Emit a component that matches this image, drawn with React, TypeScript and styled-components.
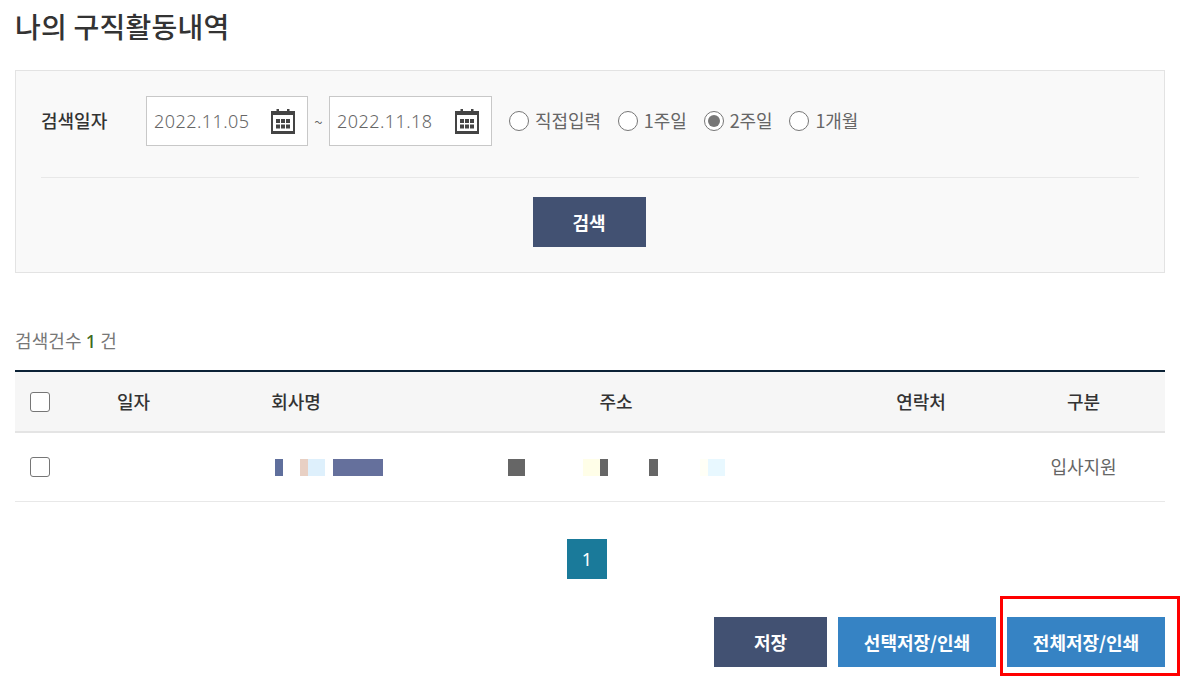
import React from 'react';
import styled, { createGlobalStyle } from 'styled-components';

const GlobalStyle = createGlobalStyle`
  html, body {
    margin: 0;
    padding: 0;
    background: #ffffff;
    overflow: hidden;
  }
  body {
    font-family: "Noto Sans CJK KR", "Noto Sans", sans-serif;
    color: #666666;
  }
  * {
    box-sizing: border-box;
  }
`;

const Page = styled.div`
  position: relative;
  width: 1193px;
  height: 684px;
  padding: 0 28px 0 15px;
`;

const Title = styled.h1`
  margin: 0;
  height: 70px;
  padding-top: 6px;
  font-size: 28px;
  line-height: 40px;
  font-weight: 500;
  letter-spacing: 0.25px;
  color: #333333;
`;

const SearchPanel = styled.section`
  height: 203px;
  padding: 25px 25px 0;
  background: #f9f9f9;
  border: 1px solid #e3e3e3;
`;

const SearchRow = styled.div`
  display: flex;
  align-items: center;
  height: 50px;
`;

const SearchLabel = styled.span`
  width: 105px;
  padding-bottom: 2px;
  font-size: 18px;
  font-weight: 500;
  color: #333333;
`;

const DateField = styled.div<{ $width: number }>`
  display: flex;
  align-items: center;
  justify-content: space-between;
  width: ${props => props.$width}px;
  height: 50px;
  padding: 0 12px 0 7px;
  background: #ffffff;
  border: 1px solid #c8c8c8;
  font-family: "Noto Sans", sans-serif;
  font-size: 18px;
  font-weight: 300;
  color: #666666;
  letter-spacing: 0.45px;
`;

const Tilde = styled.span`
  width: 21px;
  text-align: center;
  font-size: 15px;
  color: #666666;
`;

const RadioGroup = styled.div`
  display: flex;
  align-items: center;
  margin-left: 17px;
  gap: 17px;
`;

const RadioItem = styled.label`
  display: flex;
  align-items: center;
  gap: 6px;
  font-size: 18px;
  letter-spacing: -0.1px;
  color: #666666;
`;

const RadioText = styled.span`
  padding-bottom: 3px;
`;

const RadioMark = styled.span<{ $checked?: boolean }>`
  display: flex;
  align-items: center;
  justify-content: center;
  width: 20px;
  height: 20px;
  border: 1.5px solid #767676;
  border-radius: 50%;
  background: #ffffff;

  &::after {
    content: '';
    display: ${props => (props.$checked ? 'block' : 'none')};
    width: 12px;
    height: 12px;
    border-radius: 50%;
    background: #767676;
  }
`;

const Divider = styled.hr`
  margin: 31px 0 19px;
  border: 0;
  border-top: 1px solid #e8e8e8;
`;

const ButtonCenter = styled.div`
  display: flex;
  justify-content: center;
  padding-right: 2px;
`;

const ActionButton = styled.button<{ $width: number; $blue?: boolean }>`
  width: ${props => props.$width}px;
  height: 50px;
  border: 0;
  padding: 0;
  background: ${props => (props.$blue ? '#3683c4' : '#425172')};
  color: #ffffff;
  font-family: inherit;
  font-size: 18px;
  font-weight: 700;
`;

const ResultCount = styled.p`
  margin: 0;
  height: 97px;
  padding-top: 54px;
  font-size: 18px;
  line-height: 26px;
  letter-spacing: 0.1px;
  color: #777777;

  strong {
    font-family: "Noto Sans", sans-serif;
    font-weight: 500;
    color: #3f6b1f;
  }
`;

const Table = styled.div`
  border-top: 2px solid #0c2236;
`;

const Row = styled.div<{ $head?: boolean }>`
  display: grid;
  grid-template-columns: 50px 135px 190px 450px 160px 165px;
  align-items: center;
  justify-items: center;
  height: ${props => (props.$head ? '61px' : '69px')};
  background: ${props => (props.$head ? '#f6f6f6' : '#ffffff')};
  border-bottom: ${props => (props.$head ? '2px solid #e4e4e4' : '1px solid #e8e8e8')};
`;

const HeadCell = styled.span`
  padding: 0 0 2px 2px;
  font-size: 18px;
  font-weight: 500;
  color: #333333;
`;

const BodyCell = styled.span`
  padding: 0 0 2px 2px;
  font-size: 18px;
  color: #666666;
`;

const CheckBox = styled.span`
  display: block;
  width: 20px;
  height: 20px;
  border: 1.5px solid #767676;
  border-radius: 3px;
  background: #ffffff;
`;

const Mosaic = styled.div`
  display: flex;
  height: 17px;
  width: 100%;
`;

const MosaicBlock = styled.span<{ $width: number; $color?: string }>`
  width: ${props => props.$width}px;
  background: ${props => props.$color ?? 'transparent'};
`;

const Pagination = styled.nav`
  display: flex;
  justify-content: center;
  padding: 37px 6px 0 0;
`;

const PageButton = styled.span`
  display: flex;
  align-items: center;
  justify-content: center;
  width: 40px;
  height: 40px;
  background: #1a7a9a;
  color: #ffffff;
  font-family: "Noto Sans", sans-serif;
  font-size: 18px;
`;

const BottomBar = styled.div`
  display: flex;
  justify-content: flex-end;
  gap: 11px;
  padding-top: 38px;
`;

const Highlight = styled.div`
  position: absolute;
  left: 1000px;
  top: 596px;
  width: 180px;
  height: 80px;
  border: 3px solid #ff0000;
  pointer-events: none;
`;

const CalendarIcon: React.FC = () => (
  <svg width="24" height="25" viewBox="0 0 24 25" fill="none">
    <rect x="1" y="3" width="22" height="20.5" fill="#ffffff" stroke="#444444" strokeWidth="2" />
    <rect x="1" y="3" width="22" height="3" fill="#444444" />
    <rect x="0" y="22" width="24" height="3" fill="#444444" />
    <rect x="5.5" y="0" width="2.5" height="6" fill="#444444" />
    <rect x="16" y="0" width="2.5" height="6" fill="#444444" />
    {[5, 10, 15].map(x =>
      [10, 15.5].map(y => <rect key={`${x}-${y}`} x={x} y={y} width="4" height="4" fill="#444444" />)
    )}
  </svg>
);

const companyBlocks = [
  { width: 8, color: '#5f6f9c' },
  { width: 17 },
  { width: 8, color: '#e8d0c4' },
  { width: 17, color: '#def0fc' },
  { width: 8 },
  { width: 50, color: '#65709c' },
];

const addressBlocks = [
  { width: 17, color: '#666666' },
  { width: 58 },
  { width: 17, color: '#fffee8' },
  { width: 8, color: '#666666' },
  { width: 41 },
  { width: 9, color: '#666666' },
  { width: 42 },
  { width: 8, color: '#fffff6' },
  { width: 17, color: '#e8f8ff' },
];

const radios = [
  { label: '직접입력' },
  { label: '1주일' },
  { label: '2주일', checked: true },
  { label: '1개월' },
];

const App: React.FC = () => {
  return (
    <Page>
      <GlobalStyle />
      <Title>나의 구직활동내역</Title>

      <SearchPanel>
        <SearchRow>
          <SearchLabel>검색일자</SearchLabel>
          <DateField $width={162}>
            2022.11.05
            <CalendarIcon />
          </DateField>
          <Tilde>~</Tilde>
          <DateField $width={163}>
            2022.11.18
            <CalendarIcon />
          </DateField>
          <RadioGroup>
            {radios.map(radio => (
              <RadioItem key={radio.label}>
                <RadioMark $checked={radio.checked} />
                <RadioText>{radio.label}</RadioText>
              </RadioItem>
            ))}
          </RadioGroup>
        </SearchRow>
        <Divider />
        <ButtonCenter>
          <ActionButton $width={113}>검색</ActionButton>
        </ButtonCenter>
      </SearchPanel>

      <ResultCount>
        검색건수 <strong>1</strong> 건
      </ResultCount>

      <Table>
        <Row $head>
          <CheckBox />
          <HeadCell>일자</HeadCell>
          <HeadCell>회사명</HeadCell>
          <HeadCell>주소</HeadCell>
          <HeadCell>연락처</HeadCell>
          <HeadCell>구분</HeadCell>
        </Row>
        <Row>
          <CheckBox />
          <span />
          <Mosaic>
            <MosaicBlock $width={75} />
            {companyBlocks.map((block, i) => (
              <MosaicBlock key={i} $width={block.width} $color={block.color} />
            ))}
          </Mosaic>
          <Mosaic>
            <MosaicBlock $width={118} />
            {addressBlocks.map((block, i) => (
              <MosaicBlock key={i} $width={block.width} $color={block.color} />
            ))}
          </Mosaic>
          <span />
          <BodyCell>입사지원</BodyCell>
        </Row>
      </Table>

      <Pagination>
        <PageButton>1</PageButton>
      </Pagination>

      <BottomBar>
        <ActionButton $width={113}>저장</ActionButton>
        <ActionButton $width={158} $blue>선택저장/인쇄</ActionButton>
        <ActionButton $width={158} $blue>전체저장/인쇄</ActionButton>
      </BottomBar>

      <Highlight />
    </Page>
  );
};

export default App;
